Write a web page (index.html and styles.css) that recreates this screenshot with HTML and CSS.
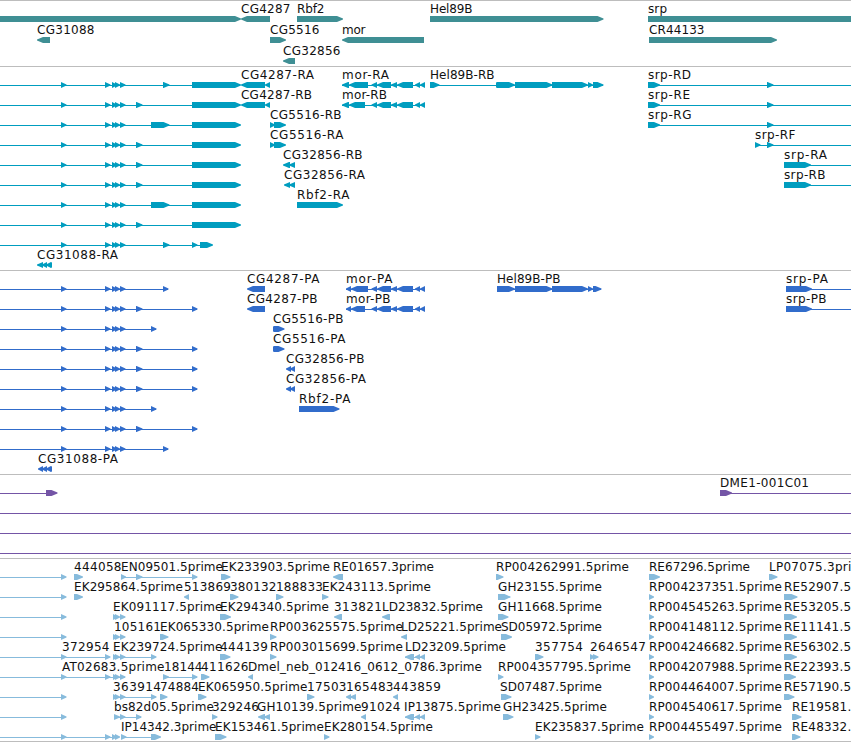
FILE: index.html
```
<!DOCTYPE html>
<html lang="en">
<head>
<meta charset="utf-8">
<title>Genome tracks</title>
<link rel="stylesheet" href="styles.css">
</head>
<body>
<main class="browser">
  <section class="track genes" data-track="genes"></section>
  <section class="track transcripts" data-track="transcripts"></section>
  <section class="track proteins" data-track="proteins"></section>
  <section class="track clones" data-track="clones"></section>
  <section class="track ests" data-track="ests"></section>
</main>
<script src="tracks.js"></script>
</body>
</html>
```
FILE: styles.css
```
body {
  margin: 0;
  background: #fff;
  overflow: hidden;
}
.browser {
  display: flex;
  flex-direction: column;
  width: 851px;
  height: 741px;
  border-bottom: 1px solid #bdbdbd;
}
.track {
  box-sizing: border-box;
  border-top: 1px solid #bdbdbd;
  overflow: hidden;
}
.track svg {
  display: block;
  width: 100%;
  height: 100%;
}
.genes { height: 66px; color: #3f8f94; }
.transcripts { height: 204px; color: #009dbf; }
.proteins { height: 204px; color: #316ccb; }
.clones { height: 84px; color: #7455a6; }
.ests { height: 183px; color: #87bbdc; }
.shape { fill: currentColor; }
.label {
  fill: #111;
  font: 12px "DejaVu Sans", sans-serif;
}
```
FILE: tracks.js
```
// Each row is a list of items separated by ";".
//   "=a-b"      connecting line
//   ">a-b"      block pointing right, "<a-b" pointing left
//   "name@a-b"  label spanning a to b
const exons = "=0-66;>61-66.5;>105-110.5;>112-117;>115-120;>120-125.5;";
const left = (end, rest) => exons + "=0-" + end + ";" + rest;
const morTail = ";<371.5-377;<377-391;<391-397;<397-413;<415-420;<420-425";
const helTail = ">515-552.5;>552-588;>588-593;";
const est = "=0-61;>61-66.5;";
const cluster = ">113-118;>115-120;>120-125.5;";
const rp = (id) => "RP00" + id + ".5prime@649-782;>649-654;";
const re = (id, x, end) => "RE" + id + ".5prime@" + x + "-" + (x + 103) + ";>" + x + "-" + end;

const tracks = {
  genes: { pitch: 21, rows: [
    ">0-241;<241-270;CG4287@241-290.5;>297-343;Rbf2@297-324.5;>430-603.5;Hel89B@430-472.5;>648-860;srp@648-667",
    "<37-50;CG31088@37-94.5;>270-286;CG5516@270-319.5;<342-424;mor@342-365.5;>649-777;CR44133@649-704.5",
    "<283-295;CG32856@283-340.5"
  ]},
  transcripts: { pitch: 20, rows: [
    left(200, ">163-169.5;>192-241;<241-265;<265-270;CG4287-RA@241-314;=342-425;<342-349;<349-368" + morTail + ";mor-RA@342-389;=430-603;>430-439.5;>496-500;>497-515;" + helTail + ">593-603.5;Hel89B-RB@430-494.5;=648-851;>648-660;>767-773.5;srp-RD@648-691"),
    left(200, ">136-142.5;>192-241;<241-265;<265-270;CG4287-RB@241-312;=342-425;<342-349;<349-365" + morTail + ";mor-RB@342-387;=648-851;>648-660;>767-773.5;srp-RE@648-690"),
    left(200, ">151-169.5;>192-241;>270-275;>274-286;CG5516-RB@270-341.5;=648-851;>648-660;>767-773.5;srp-RG@648-691.5"),
    left(200, ">136-142.5;>192-241;>270-275;>274-286;CG5516-RA@270-343.5;=755-851;>755-760.5;>767-773.5;srp-RF@755-795.5"),
    left(200, ">136-142.5;>192-241;<283-290;<289-295;CG32856-RB@283-362.5;=784-851;>784-811;srp-RA@784-827"),
    left(200, ">136-142.5;>192-241;<284-290;<289-295;CG32856-RA@284-365;=784-851;>784-811;srp-RB@784-825.5"),
    left(200, ">151-169.5;>192-241;>297-343;Rbf2-RA@297-349.5"),
    left(200, ">136-142.5;>192-241"),
    left(205, ">163-169.5;>192-197.5;>200-213"),
    "<37-43;<42-47;<46-51;<48-52;CG31088-RA@37-118"
  ]},
  proteins: { pitch: 20, rows: [
    left(168, ">163-168.5;<247-265;CG4287-PA@247-319.5;=346-425;<346-351;<351-368" + morTail + ";mor-PA@346-392.5;=497-601;>497-515;" + helTail + ">593-601.5;Hel89B-PB@497-560.5;=786-851;>786-812;srp-PA@786-828"),
    left(197, ">136-142.5;>192-197.5;<247-265;CG4287-PB@247-317.5;=346-425;<346-351;<351-365" + morTail + ";mor-PB@346-390.5;=786-851;>786-812;srp-PB@786-826.5"),
    left(156, ">151-156.5;>273-277;>274-284.5;CG5516-PB@273-343.5"),
    left(197, ">136-142.5;>192-197.5;>273-277;>274-284.5;CG5516-PA@273-345.5"),
    left(197, ">136-142.5;>192-197.5;<286-291;<290-295;CG32856-PB@286-364.5"),
    left(197, ">136-142.5;>192-197.5;<286-291;<290-295;CG32856-PA@286-366"),
    left(156, ">151-156.5;>299-339.5;Rbf2-PA@299-350.5"),
    left(197, ">136-142.5;>192-197.5"),
    left(168, ">163-168.5"),
    "<38-43;<42-47;<46-51;<48-52;CG31088-PA@38-118"
  ]},
  clones: { pitch: 20, rows: [
    "=0-50;>46-57.5;=720-851;>720-732;DME1-001C01@720-809",
    "=0-851", "=0-851", "=0-851"
  ]},
  ests: { pitch: 20, rows: [
    est + "444058@74-121.5;>74-83;EN09501.5prime@121-223;=121-197;>121-126;>136-142.5;>192-197.5;EK233903.5prime@221-330;>221-230.5;RE01657.3prime@333-434;<333-343;RP004262991.5prime@496-629;>496-503.5;RE67296.5prime@649-750;>649-660;LP07075.3prime@769-871;>769-777.5",
    est + "EK295864.5prime@74-183;>74-83;513869@184-231;<184-189;380132@230-276.5;>230-238.5;188833@276-323;>276-283.5;EK243113.5prime@322-431;>322-328.5;GH23155.5prime@498-602;>498-510.5;" + rp("4237351") + re("52907", 784, 797.5),
    est + cluster + "EK091117.5prime@113-222.5;>220-231;EK294340.5prime@220-329;<334-342;313821@334-382;<382-390;LD23832.5prime@382-483;GH11668.5prime@498-602;>498-508.5;" + rp("4545263") + re("53205", 784, 797),
    est + cluster + "105161@114-161;>160-168.5;EK065330.5prime@160-269;>270-276.5;RP003625575.5prime@270-403;<401-407;LD25221.5prime@401-502;>501-512;SD05972.5prime@501-602;" + rp("4148112") + re("11141", 784, 797),
    est + "=66-105;>105-110.5;372954@62-109.5;=113-155;" + cluster + ">151-156.5;EK239724.5prime@113-222.5;>220-230.5;444139@220-268;>270-276.5;RP003015699.5prime@270-403;=405-425;<405-414;<415-420;<420-425;LD23209.5prime@405-506;>535-543.5;357754@535-583;>590-595;>593-598.5;2646547@590-646;" + rp("4246682") + re("56302", 784, 797),
    est + "=66-125;>105-110.5;" + cluster + "AT02683.5prime@62-164.5;=163-197;>163-169;>192-197.5;18144@164-202.5;>201-209.5;411626@201-248.5;<248-253;Dmel_neb_012416_0612_0786.3prime@248-482;>498-503.5;RP004357795.5prime@498-631;" + rp("4207988") + re("22393", 784, 796),
    est + "=113-155;" + cluster + ">151-156.5;363914@113-161;>160-167.5;74884@160-199;>198-206.5;EK065950.5prime@198-307.5;>307-314.5;17503@307-346.5;<346-351;<350-356;165483@346-393.5;<393-398;443859@393-441;>501-511.5;SD07487.5prime@500-602;" + rp("4464007") + re("57190", 784, 794.5),
    est + "=114-141;>114-120;>120-125.5;>136-141.5;bs82d05.5prime@114-214;>212-217.5;329246@212-259;<258-265;<264-270;GH10139.5prime@257-361.5;<361-366;91024@361-400.5;=405-425;<405-414;<415-420;<420-425;IP13875.5prime@404-501;>503-513.5;GH23425.5prime@503-607;" + rp("4540617") + re("19581", 792, 801.5),
    est + "=66-119;>105-110.5;>112-117;>115-120;=121-155;>121-126.5;>151-161;IP14342.3prime@121-216.5;>215-226.5;EK153461.5prime@215-324;>324-329.5;EK280154.5prime@324-433;>535-540.5;EK235837.5prime@535-644;" + rp("4455497") + re("48332", 792, 800.5)
  ]}
};

const NS = "http://www.w3.org/2000/svg";
function add(parent, name, attrs) {
  const node = document.createElementNS(NS, name);
  for (const key in attrs) node.setAttribute(key, attrs[key]);
  parent.appendChild(node);
  return node;
}

function arrow(a, b, y, toRight) {
  const head = Math.min(6, b - a);
  const [tip, tail, neck] = toRight ? [b, a, b - head] : [a, b, a + head];
  return `${tail},${y} ${neck},${y} ${tip},${y + 2.6} ${tip},${y + 3.4} ${neck},${y + 6} ${tail},${y + 6}`;
}

document.querySelectorAll(".track").forEach((section) => {
  const { pitch, rows } = tracks[section.dataset.track];
  const svg = add(section, "svg", {});
  rows.forEach((row, i) => {
    const y = i * pitch + 15;
    row.split(";").filter(Boolean).forEach((item) => {
      const [, name, kind, a, b] = item.match(/^(.*?)([=<>@])([\d.]+)-([\d.]+)$/);
      const x1 = Number(a), x2 = Number(b);
      if (kind === "=") {
        add(svg, "rect", { class: "shape", x: x1, y: y + 3, width: x2 - x1, height: 1 });
      } else if (kind === "@") {
        const text = add(svg, "text", { class: "label", x: x1, y: y - 3, textLength: x2 - x1 });
        text.textContent = name;
      } else {
        add(svg, "polygon", { class: "shape", points: arrow(x1, x2, y, kind === ">") });
      }
    });
  });
});
```
